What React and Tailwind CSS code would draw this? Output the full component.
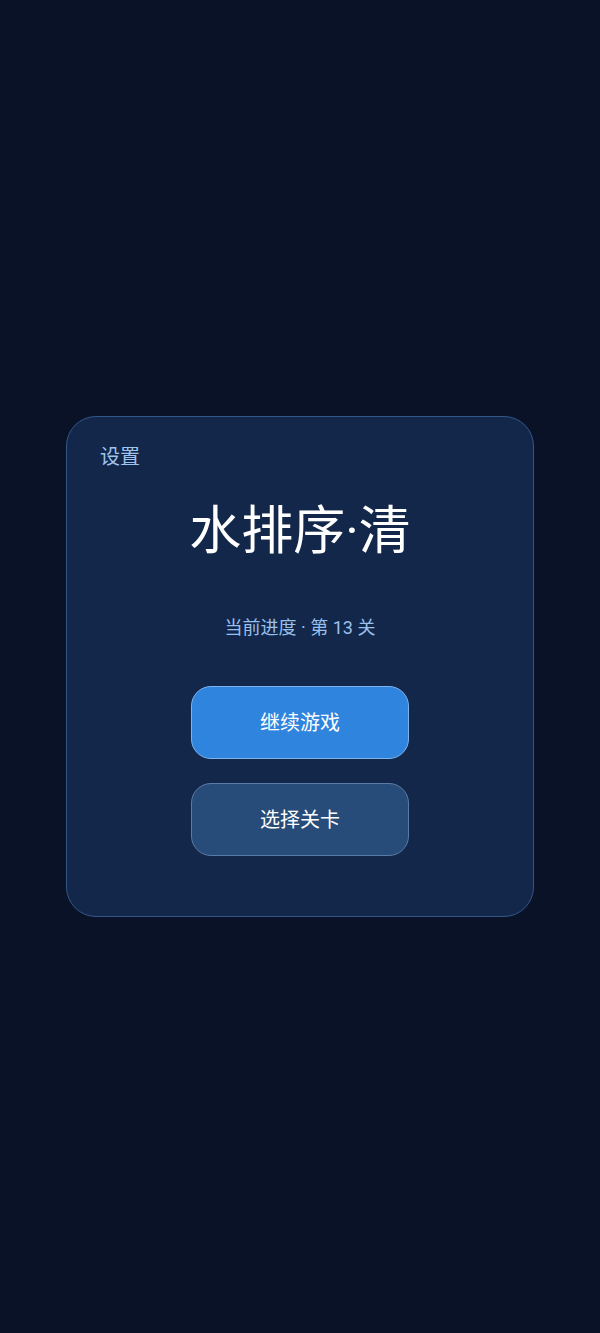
import React from "react";

const cjk = { fontFamily: 'Roboto, "Noto Sans CJK SC", "Noto Sans", sans-serif' };

export default function App() {
  return (
    <div
      className="min-h-[1333px] w-full bg-[#0a1228] flex flex-col items-center pt-[416px]"
      style={cjk}
    >
      {/* Menu card */}
      <div className="w-[468px] h-[501px] rounded-[30px] border border-[#34578a] bg-[#13274a] px-[33px] pt-[26px] flex flex-col">
        <button className="self-start text-[20px] leading-[28px] text-[#9fc4ee]">
          设置
        </button>

        <h1 className="mt-[25px] text-center text-[52px] leading-[72px] text-white">
          水排序·清
        </h1>

        <p className="mt-[47px] text-center text-[18px] leading-[26px] text-[#98c0ec]">
          当前进度 · 第 13 关
        </p>

        <div className="mt-[45px] flex flex-col items-center gap-[24px]">
          <button className="w-[218px] h-[73px] rounded-[20px] border border-[#7db4f0] bg-[#2f84de] text-[20px] text-white">
            继续游戏
          </button>
          <button className="w-[218px] h-[73px] rounded-[20px] border border-[#5a7ba5] bg-[#284c79] text-[20px] text-white">
            选择关卡
          </button>
        </div>
      </div>
    </div>
  );
}
